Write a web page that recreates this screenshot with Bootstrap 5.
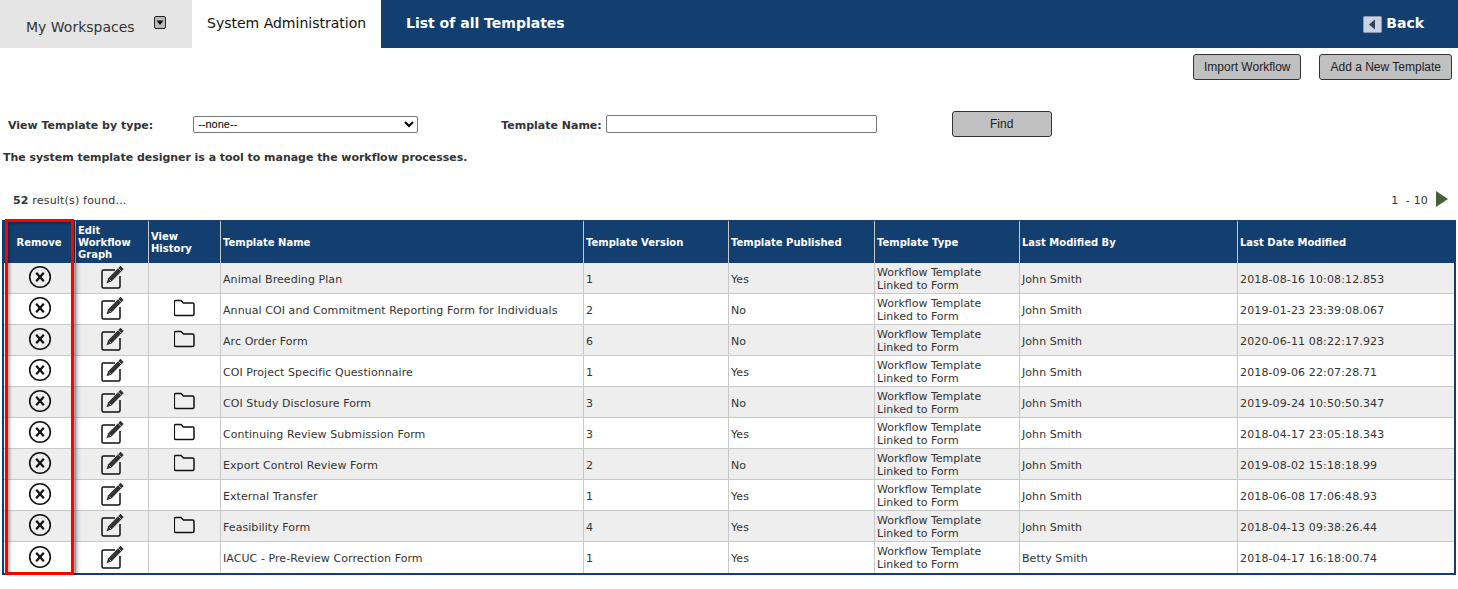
<!DOCTYPE html>
<html lang="en">
<head>
  <meta charset="UTF-8">
  <title>List of all Templates</title>
  <link href="https://cdn.jsdelivr.net/npm/bootstrap@5.3.2/dist/css/bootstrap.min.css" rel="stylesheet">
  <style>
    body { font-family: "DejaVu Sans", Verdana, sans-serif; font-size: 11px; color: #333; background: #fff; overflow: hidden; }
    .topbar { height: 48px; background: #123f70; }
    .tab-work { width: 192px; background: #e5e5e5; color: #333; font-size: 14px; padding: 17px 0 0 26px; }
    .tab-work svg { margin-left: 15px; margin-top: -12px; }
    .tab-admin { width: 189px; background: #fff; color: #111; font-size: 14px; padding: 13px 0 0 15px; }
    .tab-title { color: #fff; font-size: 14px; font-weight: 700; padding: 13px 0 0 25px; }
    .tab-back { color: #fff; font-size: 14px; font-weight: 700; padding: 13px 34px 0 0; }
    .tab-back svg { margin-right: 4px; }
    .gray-btn { font-family: "Liberation Sans", Arial, sans-serif; font-size: 12px; color: #222; background: #c0c0c0; border: 1px solid #333; border-radius: 3px; height: 26px; padding: 0 10px; }
    .top-actions { padding: 6px 6px 0 0; gap: 18px; }
    .filter-row { margin-top: 31px; height: 26px; padding-left: 8px; }
    .filter-row label { font-weight: 700; padding-top: 4px; }
    .type-select { width: 225px; height: 17px; margin-left: 40px; font-family: "Liberation Sans", Arial, sans-serif; font-size: 11px; padding: 0; border: 1px solid #767676; border-radius: 2px; background: #fff; }
    .filter-row .name-label { margin-left: 83px; margin-right: 4px; }
    .name-input { width: 271px; height: 18px; border: 1px solid #767676; border-radius: 2px; padding: 0 2px; }
    .find-btn { width: 100px; margin-left: 75px; }
    .intro { margin: 14px 0 0 3px; font-weight: 700; line-height: 13px; letter-spacing: -.04px; }
    .result-row { margin-top: 27px; height: 18px; padding: 2px 10px 0 13px; letter-spacing: .18px; }
    .pager-arrow { margin-left: 8px; margin-top: -4px; }
    .grid-wrap { position: relative; margin: 11px 2px 0 2px; }
    .tpl-grid { table-layout: fixed; width: 1454px; margin: 0; border-collapse: separate; border-spacing: 0; border: 2px solid #123f70; border-top: 0; font-size: 11px; }
    .tpl-grid th { background: #123f70; color: #fff; font-size: 10px; font-weight: 700; line-height: 12px; height: 43px; padding: 0 3px 0 2px; vertical-align: middle; border-left: 1px solid #c8c8c8; border-top: 2px solid #123f70; border-bottom: 0; box-shadow: none; }
    .tpl-grid th:first-child, .tpl-grid td:first-child { border-left: 0; }
    .tpl-grid td { height: 31px; padding: 2px 3px 0 2px; vertical-align: middle; color: #333; line-height: 13px; letter-spacing: .07px; border-left: 1px solid #c8c8c8; border-bottom: 1px solid #c8c8c8; box-shadow: none; background: #fff; }
    .tpl-grid tbody tr:nth-child(odd) td { background: #eee; }
    .tpl-grid tbody tr:last-child td { border-bottom: 0; }
    .tpl-grid td:last-child { letter-spacing: .13px; }
    .tpl-grid .icon-cell { text-align: center; padding: 0; }
    .tpl-grid .type-cell { padding-top: 1px; letter-spacing: 0; }
    .tpl-grid svg { display: block; margin: -2px auto 0; }
    .red-frame { position: absolute; left: 3px; top: -1px; width: 69px; height: 356px; border: 3px solid #f00; box-shadow: 3px 3px 4px rgba(0,0,0,.35), inset 2px 2px 3px rgba(0,0,0,.3); pointer-events: none; }
  </style>
</head>
<body>
  <svg width="0" height="0" class="position-absolute">
    <symbol id="ic-remove" viewBox="0 0 24 24">
      <circle cx="12" cy="12" r="10.300" fill="none" stroke="#111" stroke-width="1.600"/>
      <path d="M8.200 7.800l7.600 8.400M15.800 7.800l-7.600 8.400" fill="none" stroke="#111" stroke-width="2.200"/>
    </symbol>
    <symbol id="ic-edit" viewBox="0 0 24 24">
      <path d="M15 5H3.500A1.500 1.500 0 0 0 2 6.500V21.500A1.500 1.500 0 0 0 3.500 23H18.500A1.500 1.500 0 0 0 20 21.500V11" fill="none" stroke="#111" stroke-width="1.500"/>
      <path d="M20.500 .8l3.200 3.200L11.500 16.500l-5 1.800 1.700-5z" fill="#333"/>
      <path d="M9.500 14.500l1.500 1.500M18.300 3.200l2.700 2.700" stroke="#ddd" stroke-width=".8"/>
    </symbol>
    <symbol id="ic-folder" viewBox="1.500 0 22 18">
      <path d="M1.800 3a1.500 1.500 0 0 1 1.500-1.500h5.200l2.500 2.500h9A1.500 1.500 0 0 1 21.500 5.500v9.500a1.500 1.500 0 0 1-1.500 1.500h-16.700A1.500 1.500 0 0 1 1.800 15z" fill="none" stroke="#111" stroke-width="1.500"/>
    </symbol>
  </svg>

  <div class="topbar d-flex">
    <div class="tab-work">My Workspaces
      <svg width="12" height="13" viewBox="0 0 12 13"><rect x=".5" y=".5" width="11" height="12" rx="1.500" fill="#bbb" stroke="#222"/><path d="M2.500 4.500h7L6 9z" fill="#111"/></svg>
    </div>
    <div class="tab-admin">System Administration</div>
    <div class="tab-title flex-grow-1">List of all Templates</div>
    <div class="tab-back">
      <svg width="19" height="17" viewBox="0 0 19 17"><rect x=".5" y=".5" width="18" height="16" rx="1" fill="#c9d3e3" stroke="#8c9ab0"/><path d="M12 3.500v10L6 8.500z" fill="#2f3f5c"/></svg>Back
    </div>
  </div>

  <div class="top-actions d-flex justify-content-end">
    <button type="button" class="gray-btn">Import Workflow</button>
    <button type="button" class="gray-btn">Add a New Template</button>
  </div>

  <div class="filter-row d-flex align-items-center">
    <label>View Template by type:</label>
    <select class="type-select"><option>--none--</option></select>
    <label class="name-label">Template Name:</label>
    <input type="text" class="name-input">
    <button type="button" class="gray-btn find-btn">Find</button>
  </div>

  <p class="intro">The system template designer is a tool to manage the workflow processes.</p>

  <div class="result-row d-flex justify-content-between align-items-center">
    <div><strong>52</strong> result(s) found...</div>
    <div class="d-flex align-items-center">1&nbsp; - 10
      <svg class="pager-arrow" width="12" height="16" viewBox="0 0 12 16"><path d="M0 0l12 8L0 16z" fill="#45603a"/></svg>
    </div>
  </div>

  <div class="grid-wrap">
    <table class="table tpl-grid">
      <colgroup>
        <col style="width:71px"><col style="width:73px"><col style="width:72px"><col style="width:363px"><col style="width:145px"><col style="width:146px"><col style="width:145px"><col style="width:218px"><col>
      </colgroup>
      <thead>
        <tr>
          <th class="text-center">Remove</th>
          <th>Edit Workflow Graph</th>
          <th>View History</th>
          <th>Template Name</th>
          <th>Template Version</th>
          <th>Template Published</th>
          <th>Template Type</th>
          <th>Last Modified By</th>
          <th>Last Date Modified</th>
        </tr>
      </thead>
      <tbody>
        <tr>
          <td class="icon-cell"><svg width="24" height="24"><use href="#ic-remove"/></svg></td>
          <td class="icon-cell"><svg width="24" height="24"><use href="#ic-edit"/></svg></td>
          <td class="icon-cell"></td>
          <td>Animal Breeding Plan</td><td>1</td><td>Yes</td>
          <td class="type-cell">Workflow Template Linked to Form</td>
          <td>John Smith</td><td>2018-08-16 10:08:12.853</td>
        </tr>
        <tr>
          <td class="icon-cell"><svg width="24" height="24"><use href="#ic-remove"/></svg></td>
          <td class="icon-cell"><svg width="24" height="24"><use href="#ic-edit"/></svg></td>
          <td class="icon-cell"><svg width="22" height="18"><use href="#ic-folder"/></svg></td>
          <td>Annual COI and Commitment Reporting Form for Individuals</td><td>2</td><td>No</td>
          <td class="type-cell">Workflow Template Linked to Form</td>
          <td>John Smith</td><td>2019-01-23 23:39:08.067</td>
        </tr>
        <tr>
          <td class="icon-cell"><svg width="24" height="24"><use href="#ic-remove"/></svg></td>
          <td class="icon-cell"><svg width="24" height="24"><use href="#ic-edit"/></svg></td>
          <td class="icon-cell"><svg width="22" height="18"><use href="#ic-folder"/></svg></td>
          <td>Arc Order Form</td><td>6</td><td>No</td>
          <td class="type-cell">Workflow Template Linked to Form</td>
          <td>John Smith</td><td>2020-06-11 08:22:17.923</td>
        </tr>
        <tr>
          <td class="icon-cell"><svg width="24" height="24"><use href="#ic-remove"/></svg></td>
          <td class="icon-cell"><svg width="24" height="24"><use href="#ic-edit"/></svg></td>
          <td class="icon-cell"></td>
          <td>COI Project Specific Questionnaire</td><td>1</td><td>Yes</td>
          <td class="type-cell">Workflow Template Linked to Form</td>
          <td>John Smith</td><td>2018-09-06 22:07:28.71</td>
        </tr>
        <tr>
          <td class="icon-cell"><svg width="24" height="24"><use href="#ic-remove"/></svg></td>
          <td class="icon-cell"><svg width="24" height="24"><use href="#ic-edit"/></svg></td>
          <td class="icon-cell"><svg width="22" height="18"><use href="#ic-folder"/></svg></td>
          <td>COI Study Disclosure Form</td><td>3</td><td>No</td>
          <td class="type-cell">Workflow Template Linked to Form</td>
          <td>John Smith</td><td>2019-09-24 10:50:50.347</td>
        </tr>
        <tr>
          <td class="icon-cell"><svg width="24" height="24"><use href="#ic-remove"/></svg></td>
          <td class="icon-cell"><svg width="24" height="24"><use href="#ic-edit"/></svg></td>
          <td class="icon-cell"><svg width="22" height="18"><use href="#ic-folder"/></svg></td>
          <td>Continuing Review Submission Form</td><td>3</td><td>Yes</td>
          <td class="type-cell">Workflow Template Linked to Form</td>
          <td>John Smith</td><td>2018-04-17 23:05:18.343</td>
        </tr>
        <tr>
          <td class="icon-cell"><svg width="24" height="24"><use href="#ic-remove"/></svg></td>
          <td class="icon-cell"><svg width="24" height="24"><use href="#ic-edit"/></svg></td>
          <td class="icon-cell"><svg width="22" height="18"><use href="#ic-folder"/></svg></td>
          <td>Export Control Review Form</td><td>2</td><td>No</td>
          <td class="type-cell">Workflow Template Linked to Form</td>
          <td>John Smith</td><td>2019-08-02 15:18:18.99</td>
        </tr>
        <tr>
          <td class="icon-cell"><svg width="24" height="24"><use href="#ic-remove"/></svg></td>
          <td class="icon-cell"><svg width="24" height="24"><use href="#ic-edit"/></svg></td>
          <td class="icon-cell"></td>
          <td>External Transfer</td><td>1</td><td>Yes</td>
          <td class="type-cell">Workflow Template Linked to Form</td>
          <td>John Smith</td><td>2018-06-08 17:06:48.93</td>
        </tr>
        <tr>
          <td class="icon-cell"><svg width="24" height="24"><use href="#ic-remove"/></svg></td>
          <td class="icon-cell"><svg width="24" height="24"><use href="#ic-edit"/></svg></td>
          <td class="icon-cell"><svg width="22" height="18"><use href="#ic-folder"/></svg></td>
          <td>Feasibility Form</td><td>4</td><td>Yes</td>
          <td class="type-cell">Workflow Template Linked to Form</td>
          <td>John Smith</td><td>2018-04-13 09:38:26.44</td>
        </tr>
        <tr>
          <td class="icon-cell"><svg width="24" height="24"><use href="#ic-remove"/></svg></td>
          <td class="icon-cell"><svg width="24" height="24"><use href="#ic-edit"/></svg></td>
          <td class="icon-cell"></td>
          <td>IACUC - Pre-Review Correction Form</td><td>1</td><td>Yes</td>
          <td class="type-cell">Workflow Template Linked to Form</td>
          <td>Betty Smith</td><td>2018-04-17 16:18:00.74</td>
        </tr>
      </tbody>
    </table>
    <div class="red-frame"></div>
  </div>
</body>
</html>
